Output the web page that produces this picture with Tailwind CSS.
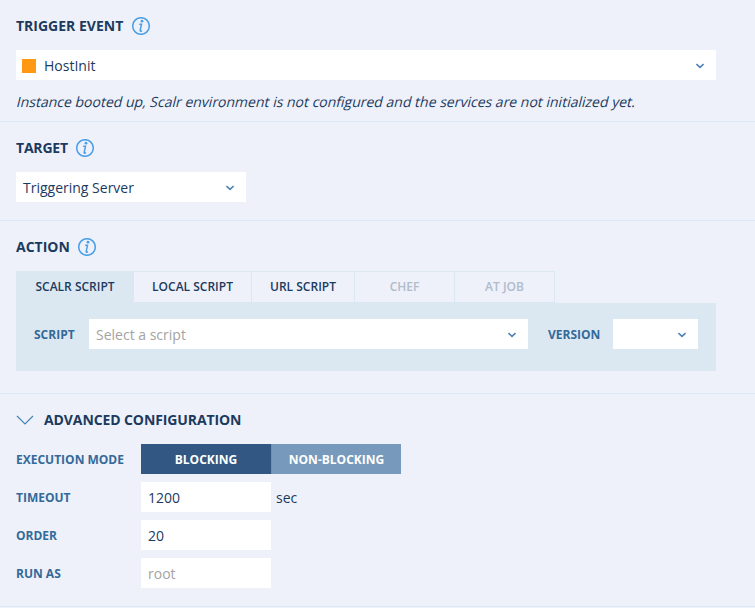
<!DOCTYPE html>
<html lang="en">
<head>
<meta charset="utf-8">
<title>Orchestration rule</title>
<script src="https://cdn.jsdelivr.net/npm/@tailwindcss/browser@4"></script>
</head>
<body class="h-[608px] overflow-hidden bg-[#eef1fa] font-['Open_Sans',sans-serif] text-[14px] leading-5 text-[#1c3a5e]">
<svg class="hidden">
  <symbol id="info" viewBox="0 0 18 18"><circle cx="9" cy="9" r="8.3" fill="none" stroke="#4a9fe6" stroke-width="1.5"/><circle cx="10" cy="4.2" r="1.4" fill="#4a9fe6"/><path d="M7.2 7.2H9.5L8.2 13.4Q8.1 14.5 8.8 14.2L10 13.6" fill="none" stroke="#4a9fe6" stroke-width="1.5"/></symbol>
  <symbol id="chev" viewBox="0 0 8 6"><path d="M.4 1L4 4.4L7.6 1" fill="none" stroke="#4e83b3" stroke-width="1.7"/></symbol>
</svg>
<section class="h-[122px] border-b border-[#dce8f5] px-4 pt-4">
  <h2 class="flex h-5 items-center gap-[9px] font-bold">TRIGGER EVENT<svg class="size-[18px]"><use href="#info"/></svg></h2>
  <div class="mt-[14px] flex h-[30px] w-[700px] items-center bg-white pt-0.5 pl-1.5 pr-3">
    <span class="mr-2 size-[14px] bg-[#ff9813]"></span><span class="grow">HostInit</span><svg class="h-1.5 w-2"><use href="#chev"/></svg>
  </div>
  <p class="mt-3 ml-px w-fit -skew-x-[14deg] whitespace-nowrap">Instance booted up, Scalr environment is not configured and the services are not initialized yet.</p>
</section>
<section class="h-[99px] border-b border-[#dce8f5] px-4 pt-4">
  <h2 class="flex h-5 items-center gap-[9px] font-bold"><span class="w-[51px] tracking-[-0.2px]">TARGET</span><svg class="size-[18px]"><use href="#info"/></svg></h2>
  <div class="mt-[14px] flex h-[30px] w-[230px] items-center bg-white pt-0.5 pl-[7px] pr-3">
    <span class="grow">Triggering Server</span><svg class="h-1.5 w-2"><use href="#chev"/></svg>
  </div>
</section>
<section class="h-[173px] border-b border-[#dce8f5] px-4 pt-4">
  <h2 class="flex h-5 items-center gap-[9px] font-bold"><span class="w-[53px]">ACTION</span><svg class="size-[18px]"><use href="#info"/></svg></h2>
  <nav class="mt-[14px] flex h-8 w-[539px] border-t border-[#dce8f1] text-center text-[12px] leading-[30px] font-semibold">
    <span class="w-[118px] bg-[#dce8f1]">SCALR SCRIPT</span>
    <span class="w-[118px] border-r border-b border-[#dce8f1]">LOCAL SCRIPT</span>
    <span class="w-[103px] border-r border-b border-[#dce8f1]">URL SCRIPT</span>
    <span class="w-[100px] border-r border-b border-[#dce8f1] text-[#b0bccb]">CHEF</span>
    <span class="w-[100px] border-r border-b border-[#dce8f1] text-[#b0bccb]">AT JOB</span>
  </nav>
  <div class="flex h-[68px] w-[700px] items-start bg-[#dce8f1] pt-4 pl-[18px] text-[12px] leading-8 font-bold text-[#336a99]">
    <span class="w-[55px]">SCRIPT</span>
    <div class="flex h-[30px] w-[439px] items-center bg-white pt-0.5 pl-[7px] pr-3 text-[14px] font-normal text-[#a3a3a3]"><span class="grow">Select a script</span><svg class="h-1.5 w-2"><use href="#chev"/></svg></div>
    <span class="ml-5 w-[65px]">VERSION</span>
    <div class="flex h-[30px] w-[85px] items-center justify-end bg-white pt-0.5 pr-3"><svg class="h-1.5 w-2"><use href="#chev"/></svg></div>
  </div>
</section>
<section class="h-[213px] border-b border-[#dce8f5] px-4 pt-4">
  <h2 class="flex h-5 items-center font-bold tracking-[-0.1px]"><svg class="mr-2.5 h-[10px] w-[18px]" viewBox="0 0 18 10"><path d="M1 1L9 9L17 1" fill="none" stroke="#4485b0" stroke-width="1.2"/></svg>ADVANCED CONFIGURATION</h2>
  <div class="mt-[14px] grid auto-rows-[30px] grid-cols-[125px_1fr] gap-y-2 leading-8">
    <span class="text-[12px] font-bold text-[#336a99]">EXECUTION MODE</span>
    <div class="flex h-[30px] text-center text-[12px] font-bold text-white"><span class="w-[130px] bg-[#315782]">BLOCKING</span><span class="w-[130px] border-l border-[#6b91b6] bg-[#7799bb]">NON-BLOCKING</span></div>
    <span class="text-[12px] font-bold text-[#336a99]">TIMEOUT</span>
    <div class="flex gap-[5px]"><span class="h-[30px] w-[130px] bg-white pl-[7px]">1200</span><span>sec</span></div>
    <span class="text-[12px] font-bold text-[#336a99]">ORDER</span>
    <span class="h-[30px] w-[130px] bg-white pl-[7px]">20</span>
    <span class="text-[12px] font-bold text-[#336a99]">RUN AS</span>
    <span class="h-[30px] w-[130px] bg-white pl-[7px] text-[#a3a3a3]">root</span>
  </div>
</section>
</body>
</html>
